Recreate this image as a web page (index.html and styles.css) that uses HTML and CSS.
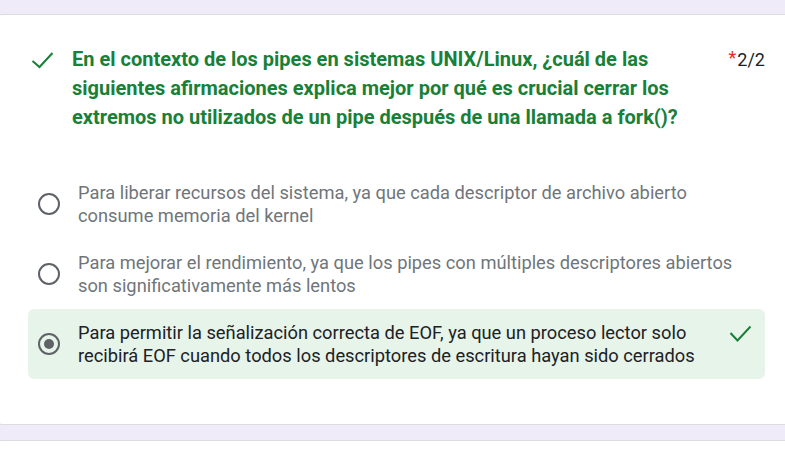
FILE: index.html
```html
<!DOCTYPE html>
<html lang="es">
<head>
<meta charset="utf-8">
<title>Pregunta</title>
<link rel="stylesheet" href="styles.css">
</head>
<body>
<div class="page">
  <div class="card">
    <div class="content">
      <div class="title-row">
        <span class="title-icon">
          <svg width="23" height="18" viewBox="0 0 23 18"><polyline points="1.5,10 8.5,16 21.5,2" fill="none" stroke="#188038" stroke-width="2"/></svg>
        </span>
        <div class="title-text">En el contexto de los pipes en sistemas UNIX/Linux, ¿cuál de las siguientes afirmaciones explica mejor por qué es crucial cerrar los extremos no utilizados de un pipe después de una llamada a fork()?</div>
        <div class="score"><span class="req">*</span>2/2</div>
      </div>
      <div class="options">
        <div class="option">
          <span class="radio"></span>
          <div class="opt-text">Para liberar recursos del sistema, ya que cada descriptor de archivo abierto consume memoria del kernel</div>
        </div>
        <div class="option">
          <span class="radio"></span>
          <div class="opt-text">Para mejorar el rendimiento, ya que los pipes con múltiples descriptores abiertos son significativamente más lentos</div>
        </div>
        <div class="option correct">
          <span class="radio checked"></span>
          <div class="opt-text">Para permitir la señalización correcta de EOF, ya que un proceso lector solo recibirá EOF cuando todos los descriptores de escritura hayan sido cerrados</div>
          <span class="opt-icon">
            <svg width="23" height="18" viewBox="0 0 23 18"><polyline points="1.5,8 8.5,15.5 21.5,1.5" fill="none" stroke="#188038" stroke-width="2"/></svg>
          </span>
        </div>
      </div>
    </div>
  </div>
  <div class="card next"></div>
</div>
</body>
</html>
```
FILE: styles.css
```css
html, body {
  margin: 0;
  padding: 0;
  background: #f0ebf8;
  font-family: Roboto, "Noto Sans", Arial, sans-serif;
  overflow: hidden;
}
.page {
  padding-top: 14px;
  width: 785px;
  height: 455px;
  overflow: hidden;
}
.card {
  background: #fff;
  border: 1px solid #dadce0;
  border-radius: 8px;
  margin-left: -6px;
  width: 830px;
  padding: 30px 0 45px 33px;
  box-sizing: border-box;
}
.card.next {
  margin-top: 15px;
  height: 40px;
  padding: 0;
}
.content {
  width: 737px;
}
.title-row {
  display: flex;
  align-items: flex-start;
  padding-left: 3px;
}
.title-icon {
  width: 41px;
  flex: none;
  padding-top: 6px;
}
.title-icon svg {
  display: block;
}
.title-text {
  flex: 1;
  font-size: 20px;
  font-weight: 700;
  line-height: 29px;
  color: #188038;
  padding-right: 16px;
}
.score {
  flex: none;
  font-size: 18px;
  line-height: 29px;
  color: #202124;
}
.req {
  color: #d93025;
  position: relative;
  top: -2px;
  margin-right: 1px;
}
.options {
  margin-top: 37px;
  display: flex;
  flex-direction: column;
}
.option {
  display: flex;
  align-items: center;
  padding: 12px 13px 12px 10px;
  border-radius: 6px;
}
.radio {
  flex: none;
  width: 22px;
  height: 22px;
  box-sizing: border-box;
  border: 2px solid #5f6368;
  border-radius: 50%;
  margin-right: 18px;
  position: relative;
}
.radio.checked::after {
  content: "";
  position: absolute;
  left: 4px;
  top: 4px;
  width: 10px;
  height: 10px;
  border-radius: 50%;
  background: #5f6368;
}
.opt-text {
  flex: 1;
  font-size: 18.3px;
  line-height: 23px;
  color: #70757a;
}
.option.correct {
  background: #e6f4ea;
}
.option.correct .opt-text {
  color: #202124;
}
.opt-icon {
  flex: none;
  align-self: flex-start;
  margin-left: 16px;
  padding-top: 4px;
}
.opt-icon svg {
  display: block;
}
```
